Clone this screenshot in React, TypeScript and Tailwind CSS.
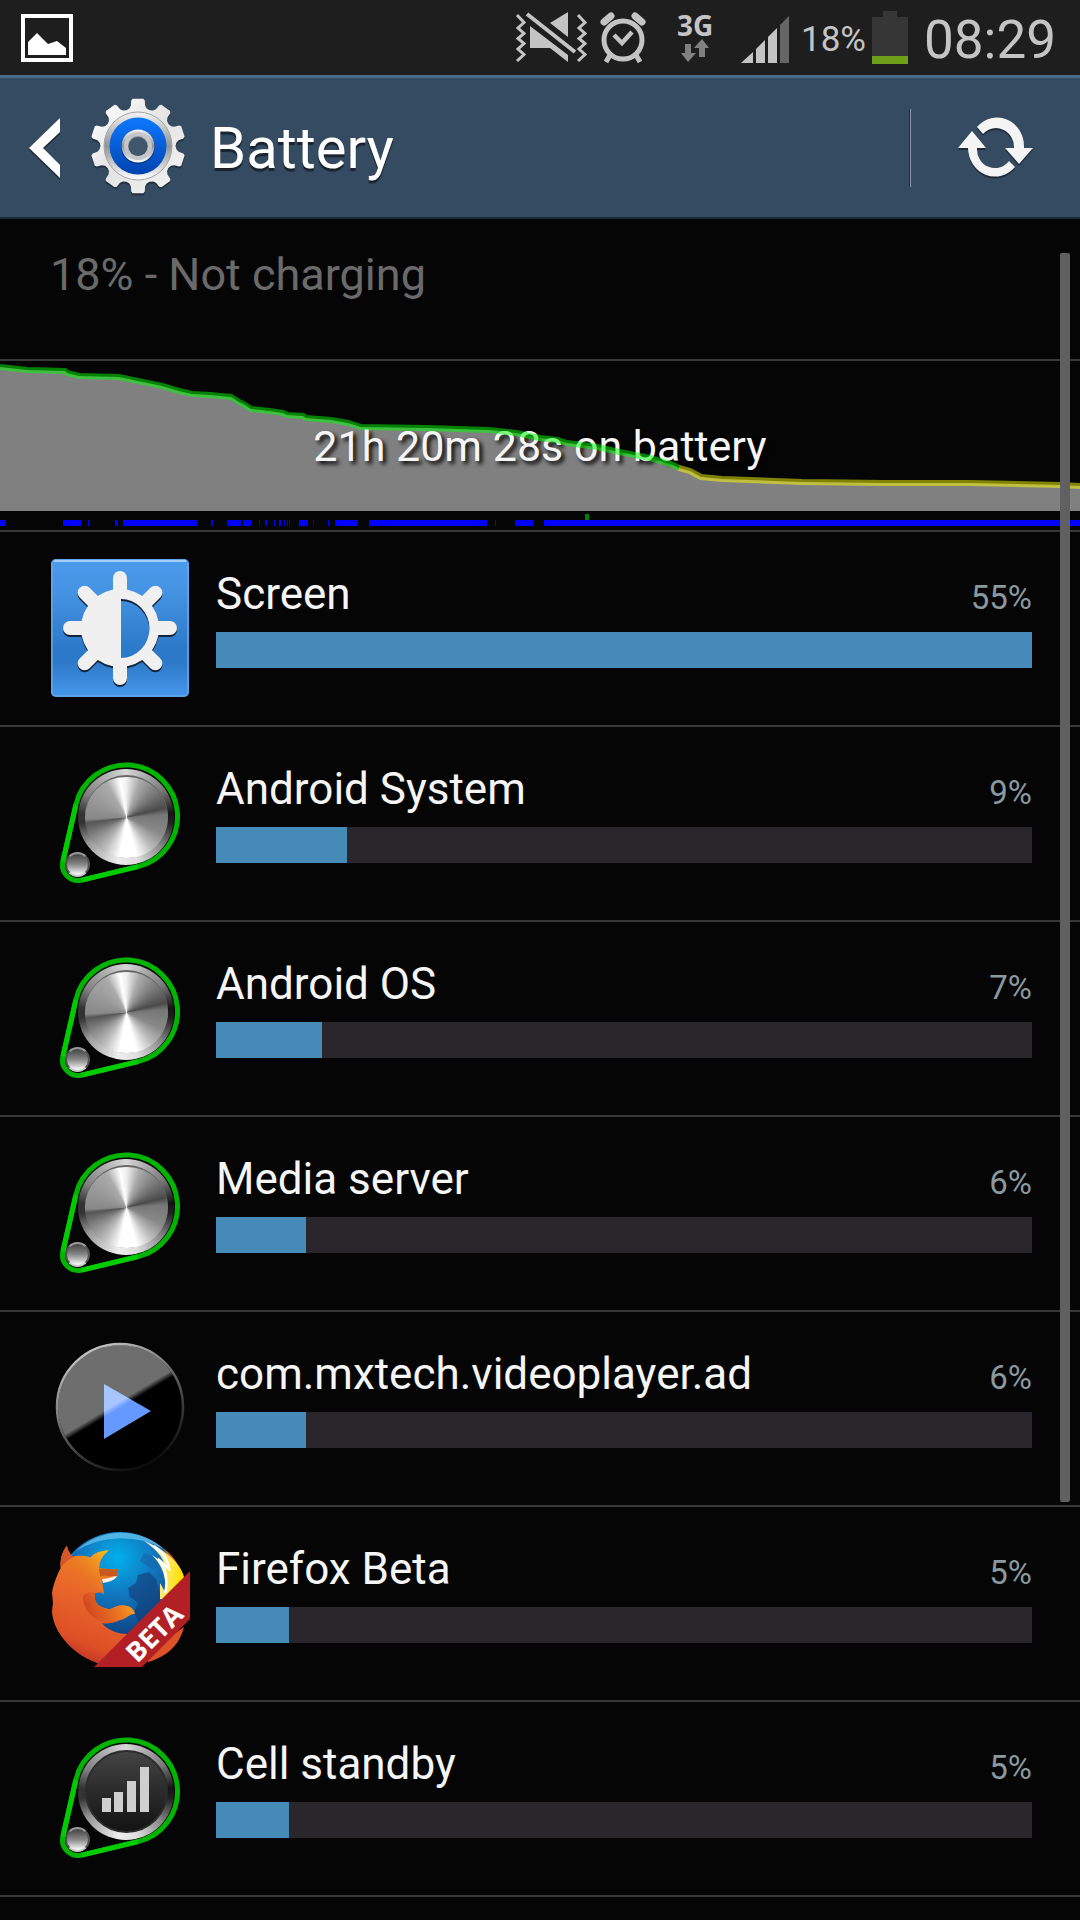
import type { ReactNode } from 'react';

// Battery level history, [x, y] inside the 1080x169 chart
const GREEN_LINE = [
  [0, 6], [27, 9], [65, 10], [67, 12], [79, 15], [119, 16], [138, 20], [162, 25], [179, 30], [192, 33],
  [210, 34], [231, 36], [239, 41], [245, 44], [251, 48], [269, 50], [283, 52], [287, 54], [303, 55], [306, 57],
  [331, 59], [348, 62], [361, 66], [427, 67], [489, 69], [516, 72], [540, 77], [557, 79], [567, 82], [598, 86],
  [619, 91], [650, 97], [671, 103], [679, 107],
];
const YELLOW_LINE = [
  [679, 107], [690, 110], [701, 116], [722, 118], [802, 121], [884, 122], [970, 122], [1060, 124], [1080, 125],
];

// Periods with the phone awake, [start, end]
const AWAKE = [
  [0, 6], [63, 81], [88, 89], [115, 118], [123, 197], [211, 213], [227, 241], [243, 251], [259, 260], [265, 267],
  [274, 275], [279, 281], [284, 285], [287, 288], [289, 290], [299, 305], [306, 308], [313, 314], [328, 329],
  [335, 358], [369, 487], [495, 496], [515, 533], [544, 1080],
];

const toPoints = (list: number[][]) => list.map((p) => p.join(',')).join(' ');

// Outline of the settings gear, ten teeth
const gearPath = () => {
  const steps = [[-18, 37.5], [-13, 38.5], [-10, 41], [-8.5, 46], [-6.5, 47.5], [6.5, 47.5], [8.5, 46], [10, 41], [13, 38.5]];
  const points: string[] = [];
  for (let i = 0; i < 10; i++) {
    steps.forEach(([deg, r]) => {
      const a = ((i * 36 + deg) * Math.PI) / 180;
      points.push(`${(48 + r * Math.sin(a)).toFixed(2)} ${(48 - r * Math.cos(a)).toFixed(2)}`);
    });
  }
  return `M${points.join('L')}Z`;
};

function StatusBar() {
  return (
    <div className="flex h-[75px] items-center justify-between bg-[#1e1e1e] pl-5 pr-6 text-[#c4c4c4]">
      <svg width="54" height="50" viewBox="0 0 54 50" className="mt-px">
        <rect x="3" y="3" width="48" height="44" fill="none" stroke="#fff" strokeWidth="4" />
        <path d="M8 42V29L17 20L28 31L37 28L46 35V42Z" fill="#fff" />
      </svg>
      <div className="flex items-center">
        {/* Silencio, sin sonido ni vibración */}
        <svg width="72" height="52" viewBox="0 0 72 52" fill="none" stroke="#c4c4c4" strokeWidth="3">
          <path d="M2 3L9 10.5L3 16L9 21.5L3 26.5L9 31.5L3 37L9 42.5L2 49" />
          <path d="M63 3L70 10.5L64 16L70 21.5L64 26.5L70 31.5L64 37L70 42.5L63 49" />
          <path d="M12 2L60 40" strokeWidth="4" />
          <path d="M15 14L53 43V50L35 36H15Z" fill="#c4c4c4" stroke="none" />
          <path d="M53 0V25L35 11Z" fill="#c4c4c4" stroke="none" />
        </svg>
        <svg width="48" height="52" viewBox="0 0 48 52" fill="none" stroke="#c4c4c4" className="ml-3">
          <circle cx="24" cy="28" r="19" strokeWidth="5" />
          <path d="M15 23L23 31L33 20" strokeWidth="4.5" />
          <path d="M5 10L12 4M43 10L36 4" strokeWidth="7" strokeLinecap="round" />
          <path d="M11 43L7 50M37 43L41 50" strokeWidth="5" />
        </svg>
        <div className="ml-6 flex w-[48px] flex-col items-center">
          <span className="font-['Open_Sans'] text-[28px] font-bold leading-[27px]">3G</span>
          <svg width="28" height="24" viewBox="0 0 28 24" fill="#808080">
            <path d="M4 5H10V14H15L7 23L0 14H4Z" />
            <path d="M18 18H24V9H28L21 0L13 9H18Z" />
          </svg>
        </div>
        <svg width="48" height="48" viewBox="0 0 48 48" fill="#c4c4c4" className="ml-[22px] mt-1">
          <path d="M0 47L12 36V47Z" />
          <path d="M15 33L24 24V47H15Z" />
          <path d="M27 21L36 12V47H27Z" />
          <path d="M39 9L48 0V47H39Z" fill="#666" />
        </svg>
        <span className="ml-3 pt-1 text-[35px] leading-[44px]">18%</span>
        <svg width="36" height="53" viewBox="0 0 36 53" className="ml-1.5">
          <path d="M11 0H25V6H36V45H0V6H11Z" fill="#363636" />
          <rect y="45" width="36" height="8" fill="#6fa01a" />
        </svg>
        <span className="ml-4 pt-1 text-[53px] leading-[64px]">08:29</span>
      </div>
    </div>
  );
}

function Header() {
  return (
    <header className="flex h-[144px] items-center border-b-2 border-t-3 border-b-[#1c2a38] border-t-[#4a6b86] bg-[#344b61] pl-6">
      <button type="button" aria-label="Back" className="flex cursor-pointer items-center gap-6">
        <svg width="40" height="64" viewBox="0 0 40 64">
          <path d="M36 4V18L19 34L36 51V64L5 34Z" fill="#1c2936" />
          <path d="M36 2V16L19 32L36 49V62L5 32Z" fill="#fff" />
        </svg>
        <svg width="100" height="100" viewBox="-2 0 100 100">
          <defs>
            <linearGradient id="gear" x1="0" y1="0" x2="1" y2="1">
              <stop offset="0" stopColor="#fff" />
              <stop offset="0.5" stopColor="#e4e4e4" />
              <stop offset="1" stopColor="#f4f4f4" />
            </linearGradient>
            <linearGradient id="gearRim" x1="0" y1="0" x2="0" y2="1">
              <stop offset="0" stopColor="#f4f4f4" />
              <stop offset="0.5" stopColor="#909498" />
              <stop offset="1" stopColor="#fff" />
            </linearGradient>
            <linearGradient id="gearBlue" x1="0" y1="0" x2="0" y2="1">
              <stop offset="0" stopColor="#0d78ff" />
              <stop offset="1" stopColor="#0043b0" />
            </linearGradient>
          </defs>
          <path d={gearPath()} fill="#22313f" transform="translate(0 2)" />
          <path d={gearPath()} fill="url(#gear)" />
          <circle cx="48" cy="48" r="34" fill="url(#gearRim)" stroke="#a4a4a4" strokeWidth="1" />
          <circle cx="48" cy="48" r="28.5" fill="url(#gearBlue)" />
          <circle cx="48" cy="49" r="17" fill="#003585" />
          <circle cx="48" cy="48" r="16.5" fill="url(#gearRim)" />
          <circle cx="48" cy="48" r="14" fill="#c4c6c8" />
          <circle cx="48" cy="48" r="10" fill="#8a9094" />
          <circle cx="48" cy="48.5" r="9.5" fill="#3f566b" />
        </svg>
      </button>
      <h1 className="ml-[22px] text-[58px] leading-[64px] text-white [text-shadow:0_3px_1px_#0008]">Battery</h1>
      <div className="ml-auto h-[78px] w-[2px] border-l border-r border-l-[#1f2f3f] border-r-[#8b98a5]"></div>
      <button type="button" aria-label="Refresh" className="flex h-full w-[169px] cursor-pointer items-center justify-center">
        <svg width="78" height="64" viewBox="0 1 78 64">
          <g fill="#1f2d3b" transform="translate(0 2)">
            <path d="M20 12A27 29 0 0 1 67 33H76L62 49L48 33H57A18 19 0 0 0 26 19Z" />
            <path d="M58 52A27 29 0 0 1 11 33H1L15 16L29 33H20A18 19 0 0 0 52 46Z" />
          </g>
          <g fill="#f4f4f4">
            <path d="M20 12A27 29 0 0 1 67 33H76L62 49L48 33H57A18 19 0 0 0 26 19Z" />
            <path d="M58 52A27 29 0 0 1 11 33H1L15 16L29 33H20A18 19 0 0 0 52 46Z" />
          </g>
        </svg>
      </button>
    </header>
  );
}

function HistoryChart() {
  return (
    <div className="relative h-[171px] border-b-2 border-[#383838]">
      <svg className="absolute inset-0 h-[169px] w-full" viewBox="0 0 1080 169" preserveAspectRatio="none">
        <polygon points={`0,150 ${toPoints([...GREEN_LINE, ...YELLOW_LINE])} 1080,150`} fill="#808080" />
        {AWAKE.map(([start, end]) => (
          <rect key={start} x={start} y="159" width={end - start} height="6" fill="#0000ff" />
        ))}
        <rect x="585" y="153" width="4" height="6" fill="#008000" />
      </svg>
      <p className="relative pt-[60px] text-center text-[43px] leading-[50px] text-[#f5f5f5] [text-shadow:3px_3px_4px_#000]">
        21h 20m 28s on battery
      </p>
      {/* La línea se dibuja por encima del texto */}
      <svg className="absolute inset-0 h-[169px] w-full" viewBox="0 0 1080 169" preserveAspectRatio="none" fill="none" strokeWidth="6">
        <polyline points={toPoints(GREEN_LINE)} stroke="#00ff00" strokeOpacity="0.5" />
        <polyline points={toPoints(YELLOW_LINE)} stroke="#ffff00" strokeOpacity="0.5" />
      </svg>
    </div>
  );
}

function ScreenIcon() {
  return (
    <svg width="144" height="144" viewBox="0 0 144 144">
      <defs>
        <linearGradient id="tile" x1="0" y1="0" x2="0" y2="1">
          <stop offset="0" stopColor="#4d9ced" />
          <stop offset="0.25" stopColor="#4492e2" />
          <stop offset="0.65" stopColor="#2d79c9" />
          <stop offset="0.75" stopColor="#2d79c9" />
          <stop offset="1" stopColor="#4798ec" />
        </linearGradient>
      </defs>
      <rect x="3" y="3" width="138" height="138" rx="5" fill="url(#tile)" />
      <rect x="4" y="4" width="136" height="136" rx="4" fill="none" stroke="#62a8f0" strokeWidth="1.5" />
      <path d="M6 5H138" stroke="#a6cdf7" strokeWidth="2" />
      {[
        ['#12243a', 2],
        ['#f0f0f0', 0],
      ].map(([color, dy]) => (
        <g key={color} transform={`translate(0 ${dy})`}>
          {[0, 45, 90, 135].map((deg) => (
            <path key={deg} d="M72 22V34M72 110V122" stroke={color as string} strokeWidth="14" strokeLinecap="round" transform={`rotate(${deg} 72 72)`} />
          ))}
          <path d="M72 33A39 39 0 1 0 72 111A39 39 0 1 0 72 33ZM73 43A28 29 0 0 1 73 102Z" fill={color as string} />
        </g>
      ))}
    </svg>
  );
}

function KnobIcon({ cell = false }: { cell?: boolean }) {
  return (
    <span className="relative block h-[144px] w-[144px]">
      <span className="absolute left-[30px] top-[18px] size-[96px] rounded-full bg-[conic-gradient(#d8d8d8,#777_55deg,#151515_85deg,#222_98deg,#888_130deg,#ddd_165deg,#eee_190deg,#999_235deg,#333_262deg,#333_275deg,#808080_300deg,#d8d8d8)]"></span>
      {!cell && (
        <span className="absolute left-[37px] top-[24px] size-[83px] rounded-full bg-[#666]">
          <span className="absolute inset-x-0 bottom-0 top-[2px] rounded-full bg-[conic-gradient(#eee,#aaa_20deg,#777_50deg,#4a4a4a_76deg,#777_86deg,#888_115deg,#bbb_140deg,#fff_165deg,#fff_190deg,#bbb_215deg,#888_240deg,#555_262deg,#888_268deg,#999_300deg,#aaa_330deg,#fff_350deg,#eee)]"></span>
        </span>
      )}
      {cell && (
        <span className="absolute left-[37px] top-[24px] size-[83px] rounded-full border-2 border-[#2c2c2c] bg-linear-to-b from-[#444] to-[#141414]"></span>
      )}
      <span className="absolute left-[17px] top-[101px] size-[25px] rounded-full border-2 border-t-[#999] border-r-[#555] border-b-[#ccc] border-l-[#555] bg-linear-to-b from-[#444] via-[#888] to-[#fff]"></span>
      <svg width="144" height="144" viewBox="0 0 144 144" className="absolute inset-0">
        <path
          d="M14.9 110.6L27.8 54.1A51.5 51.5 0 1 1 89.9 115.6L33.6 129.1A15.5 15.5 0 0 1 14.9 110.6Z"
          fill="none"
          stroke="#00b400"
          strokeWidth="5"
        />
        <path d="M14.9 110.6L27.8 54.1M89.9 115.6L33.6 129.1" stroke="#00cc00" strokeWidth="5" />
        {cell && <path d="M54 72H63V86H54ZM66 66H75V86H66ZM79 55H88V86H79ZM92 41H101V86H92Z" fill="#cfcfcf" />}
      </svg>
    </span>
  );
}

function PlayIcon() {
  return (
    <svg width="144" height="144" viewBox="0 0 144 144">
      <defs>
        <linearGradient id="playRim" x1="0.2" y1="0" x2="0.7" y2="1">
          <stop offset="0" stopColor="#d0d0d0" />
          <stop offset="0.5" stopColor="#606060" />
          <stop offset="1" stopColor="#080808" />
        </linearGradient>
        <linearGradient id="playShine" gradientUnits="userSpaceOnUse" x1="69" y1="67" x2="72" y2="72">
          <stop offset="0" stopColor="#fff" stopOpacity="0.43" />
          <stop offset="1" stopColor="#fff" stopOpacity="0" />
        </linearGradient>
      </defs>
      <circle cx="72" cy="71" r="63" fill="#000" />
      <path d="M56 48V103L103 75Z" fill="#6699ff" />
      <circle cx="72" cy="71" r="62" fill="url(#playShine)" />
      <circle cx="72" cy="71" r="63" fill="none" stroke="url(#playRim)" strokeWidth="2.5" />
    </svg>
  );
}

function FirefoxIcon() {
  return (
    <svg width="144" height="144" viewBox="0 0 144 144">
      <defs>
        <radialGradient id="globe" cx="0.48" cy="0.2" r="0.8">
          <stop offset="0" stopColor="#00b0ea" />
          <stop offset="0.35" stopColor="#1278c0" />
          <stop offset="0.7" stopColor="#0e4a8c" />
          <stop offset="1" stopColor="#1c1c50" />
        </radialGradient>
        <linearGradient id="fox" x1="0.6" y1="0" x2="0.3" y2="1">
          <stop offset="0" stopColor="#f08a1e" />
          <stop offset="0.45" stopColor="#e8652a" />
          <stop offset="0.8" stopColor="#dd4f26" />
          <stop offset="1" stopColor="#b5282a" />
        </linearGradient>
        <linearGradient id="foxArm" x1="0" y1="0.3" x2="1" y2="0">
          <stop offset="0" stopColor="#d2491f" />
          <stop offset="0.6" stopColor="#ee7d22" />
          <stop offset="1" stopColor="#f9b81c" />
        </linearGradient>
        <linearGradient id="foxEar" x1="0" y1="1" x2="1" y2="0">
          <stop offset="0.3" stopColor="#ee7d22" stopOpacity="0" />
          <stop offset="1" stopColor="#f9c81c" />
        </linearGradient>
        <linearGradient id="flame" x1="0" y1="0" x2="1" y2="0.2">
          <stop offset="0" stopColor="#fff" />
          <stop offset="0.5" stopColor="#fdeb8a" />
          <stop offset="1" stopColor="#ffe000" />
        </linearGradient>
      </defs>
      <circle cx="72" cy="66" r="65" fill="url(#globe)" />
      <path d="M28 20A65 65 0 0 1 116 18A74 60 0 0 0 28 20Z" fill="#7fd0f5" opacity="0.6" />
      <path d="M90 44L101 41L108 48L112 62L113 80L104 88L92 92L86 82L90 72L82 66L80 57L88 52Z" fill="#123a74" opacity="0.6" />
      <path d="M96 22L106 26L112 36L104 38L92 30Z" fill="#1569ae" opacity="0.7" />
      <path d="M115 17C129 27 137 42 136 64L128 52L128 34Z" fill="#e2662a" />
      <path d="M96 10C115 17 133 32 136 46C138 60 134 66 128 70L112 68L112 52L117 61C119 45 113 33 104 24L116 32C113 23 105 16 96 10Z" fill="url(#flame)" />
      <path d="M117 62C121 47 116 35 110 28L121 38C120 26 112 19 106 15" fill="none" stroke="#fff" strokeWidth="2.5" />
      <path d="M136 96C132 113 119 126 100 131L96 124Z" fill="#dd5226" />
      <path
        d="M12.7 37C12 28 14 21 18.7 14.7C20 20 22 23 25.3 26C30 24 37 25 42.7 26.3C47 21 54 20 60.7 19.3C54 25 51 31 51.3 37.3C58 37 64 39 70.3 38.5L69.3 45C66 49 61 50 54 50.7L56 63C53 61 50 61 47 62.3C46 67 47 71 50.3 74C54 76 58 78 62 78.3C67 76 73 73 79 75C84 76 87 80 86.7 83C82 82 78 88 72 89C66 92 60 93 54 92.3C60 99 68 103 80 103L92 108L80 136L52 133C26 125 5 102 4 80L5 72L4 62C5 54 9 44 12.7 37Z"
        fill="url(#fox)"
      />
      <path d="M25.3 26C30 24 37 25 42.7 26.3C47 21 54 20 60.7 19.3C54 25 51 31 51.3 37.3C52 44 55 52 56 63C50 58 40 55 30 58Z" fill="url(#foxEar)" />
      <path d="M51 38C58 37 64 39 70.3 38.5L69 45C62 46 57 44 52 45Z" fill="#c85a20" />
      <path d="M54 48C60 48 65 45 69 45C67 49 61 51 55 52Z" fill="#fff0e4" />
      <path d="M35 68C34 63 41 60 47 62.3C46 67 47 71 50.3 74C54 76 58 78 62 78.3C67 76 73 73 79 75C84 76 87 80 86.7 83C82 82 78 88 72 89C58 94 38 89 35 68Z" fill="url(#foxArm)" />
      <path d="M12.7 37C12 28 14 21 18.7 14.7C20 20 22 23 25.3 26C20 29 16 32 12.7 37Z" fill="#d4572a" />
      <path d="M142 40V88L94 136H46Z" fill="#b22026" />
      <text x="106" y="112" fill="#fff" fontFamily="Open Sans" fontWeight="700" fontSize="27" textAnchor="middle" transform="rotate(-45 106 102)">
        BETA
      </text>
    </svg>
  );
}

type Usage = { name: string; percent: number; icon: ReactNode };

const USAGE: Usage[] = [
  { name: 'Screen', percent: 55, icon: <ScreenIcon /> },
  { name: 'Android System', percent: 9, icon: <KnobIcon /> },
  { name: 'Android OS', percent: 7, icon: <KnobIcon /> },
  { name: 'Media server', percent: 6, icon: <KnobIcon /> },
  { name: 'com.mxtech.videoplayer.ad', percent: 6, icon: <PlayIcon /> },
  { name: 'Firefox Beta', percent: 5, icon: <FirefoxIcon /> },
  { name: 'Cell standby', percent: 5, icon: <KnobIcon cell /> },
];

function UsageRow({ name, percent, icon }: Usage) {
  // La barra es relativa al mayor consumo de la lista
  const width = Math.round((percent / USAGE[0].percent) * 100);

  return (
    <li className="border-b-2 border-[#383838]">
      <button type="button" className="flex min-h-[193px] w-full cursor-pointer items-start gap-6 px-12 pt-6 text-left">
        <span className="shrink-0">{icon}</span>
        <span className="block min-w-0 flex-1 pt-3">
          <span className="flex items-baseline justify-between leading-[52px]">
            <span className="text-[44px] text-[#f5f5f5]">{name}</span>
            <span className="text-[33px] text-[#8a989f]">{percent}%</span>
          </span>
          <span className="mt-2 block h-9 bg-[#29262c]">
            <span className="block h-full bg-[#468ab8]" style={{ width: `${width}%` }}></span>
          </span>
        </span>
      </button>
    </li>
  );
}

function App() {
  return (
    <div className="min-h-screen bg-[#050505] font-[Roboto,sans-serif]">
      <StatusBar />
      <Header />
      <main className="relative">
        <p className="border-b-2 border-[#383838] pb-[57px] pl-[50px] pt-[29px] text-[45px] leading-[54px] text-[#6a6a6a]">
          18% - Not charging
        </p>
        <HistoryChart />
        <ul>
          {USAGE.map((item) => (
            <UsageRow key={item.name} {...item} />
          ))}
        </ul>
        <div className="absolute right-[10px] top-[34px] h-[1249px] w-[10px] rounded-xs bg-[#606060]"></div>
      </main>
    </div>
  );
}

export default App;
